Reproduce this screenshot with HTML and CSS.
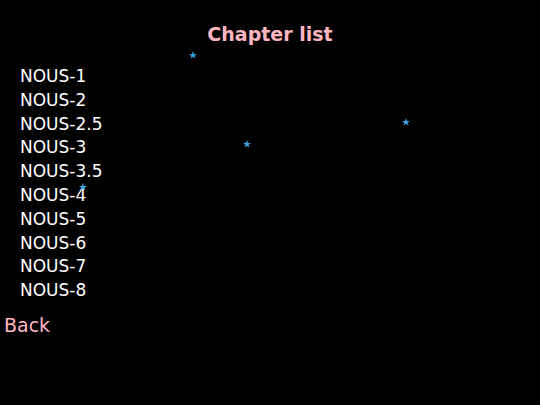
FILE: index.html
```html
<!DOCTYPE html>
<html lang="en">
<head>
    <meta charset="UTF-8">
    <meta name="viewport" content="width=device-width, initial-scale=1.0">
    <title>Chapter list</title>
    <link rel="stylesheet" href="styles.css">
</head>
<body>
    <div class="screen">
        <h1 class="title">Chapter list</h1>

        <ul class="chapters">
            <li>NOUS-1</li>
            <li>NOUS-2</li>
            <li>NOUS-2.5</li>
            <li>NOUS-3</li>
            <li>NOUS-3.5</li>
            <li>NOUS-4</li>
            <li>NOUS-5</li>
            <li>NOUS-6</li>
            <li>NOUS-7</li>
            <li>NOUS-8</li>
        </ul>

        <div class="back">Back</div>

        <!-- estrellas de fondo -->
        <svg class="star" style="left: 189px; top: 51px;" viewBox="0 0 10 10"><polygon points="5,0 6.2,3.6 10,3.6 6.9,5.8 8.1,9.5 5,7.2 1.9,9.5 3.1,5.8 0,3.6 3.8,3.6"/></svg>
        <svg class="star" style="left: 243px; top: 140px;" viewBox="0 0 10 10"><polygon points="5,0 6.2,3.6 10,3.6 6.9,5.8 8.1,9.5 5,7.2 1.9,9.5 3.1,5.8 0,3.6 3.8,3.6"/></svg>
        <svg class="star" style="left: 402px; top: 118px;" viewBox="0 0 10 10"><polygon points="5,0 6.2,3.6 10,3.6 6.9,5.8 8.1,9.5 5,7.2 1.9,9.5 3.1,5.8 0,3.6 3.8,3.6"/></svg>
        <svg class="star" style="left: 79px; top: 183px;" viewBox="0 0 10 10"><polygon points="5,0 6.2,3.6 10,3.6 6.9,5.8 8.1,9.5 5,7.2 1.9,9.5 3.1,5.8 0,3.6 3.8,3.6"/></svg>
    </div>
</body>
</html>
```

FILE: styles.css
```css
html, body {
    margin: 0;
    padding: 0;
    background-color: black;
}

.screen {
    position: relative;
    width: 540px;
    height: 405px;
    overflow: hidden;
    font-family: "DejaVu Sans", sans-serif;
}

.title {
    margin: 0;
    padding-top: 20px;
    text-align: center;
    color: #ffb6c1;
    font-family: "Comic Sans MS", "DejaVu Sans", sans-serif;
    font-size: 19px;
    font-weight: bold;
    line-height: 28px;
}

.chapters {
    list-style: none;
    margin: 0;
    padding: 17px 0 0 20px;
    color: white;
    font-size: 17px;
    line-height: 23.8px;
}

.back {
    margin-top: 8px;
    padding-left: 4px;
    color: #ffb6c1;
    font-family: "Comic Sans MS", "DejaVu Sans", sans-serif;
    font-size: 19px;
    line-height: 28px;
}

.star {
    position: absolute;
    width: 8px;
    height: 8px;
    fill: #3aa6e8;
}
```
